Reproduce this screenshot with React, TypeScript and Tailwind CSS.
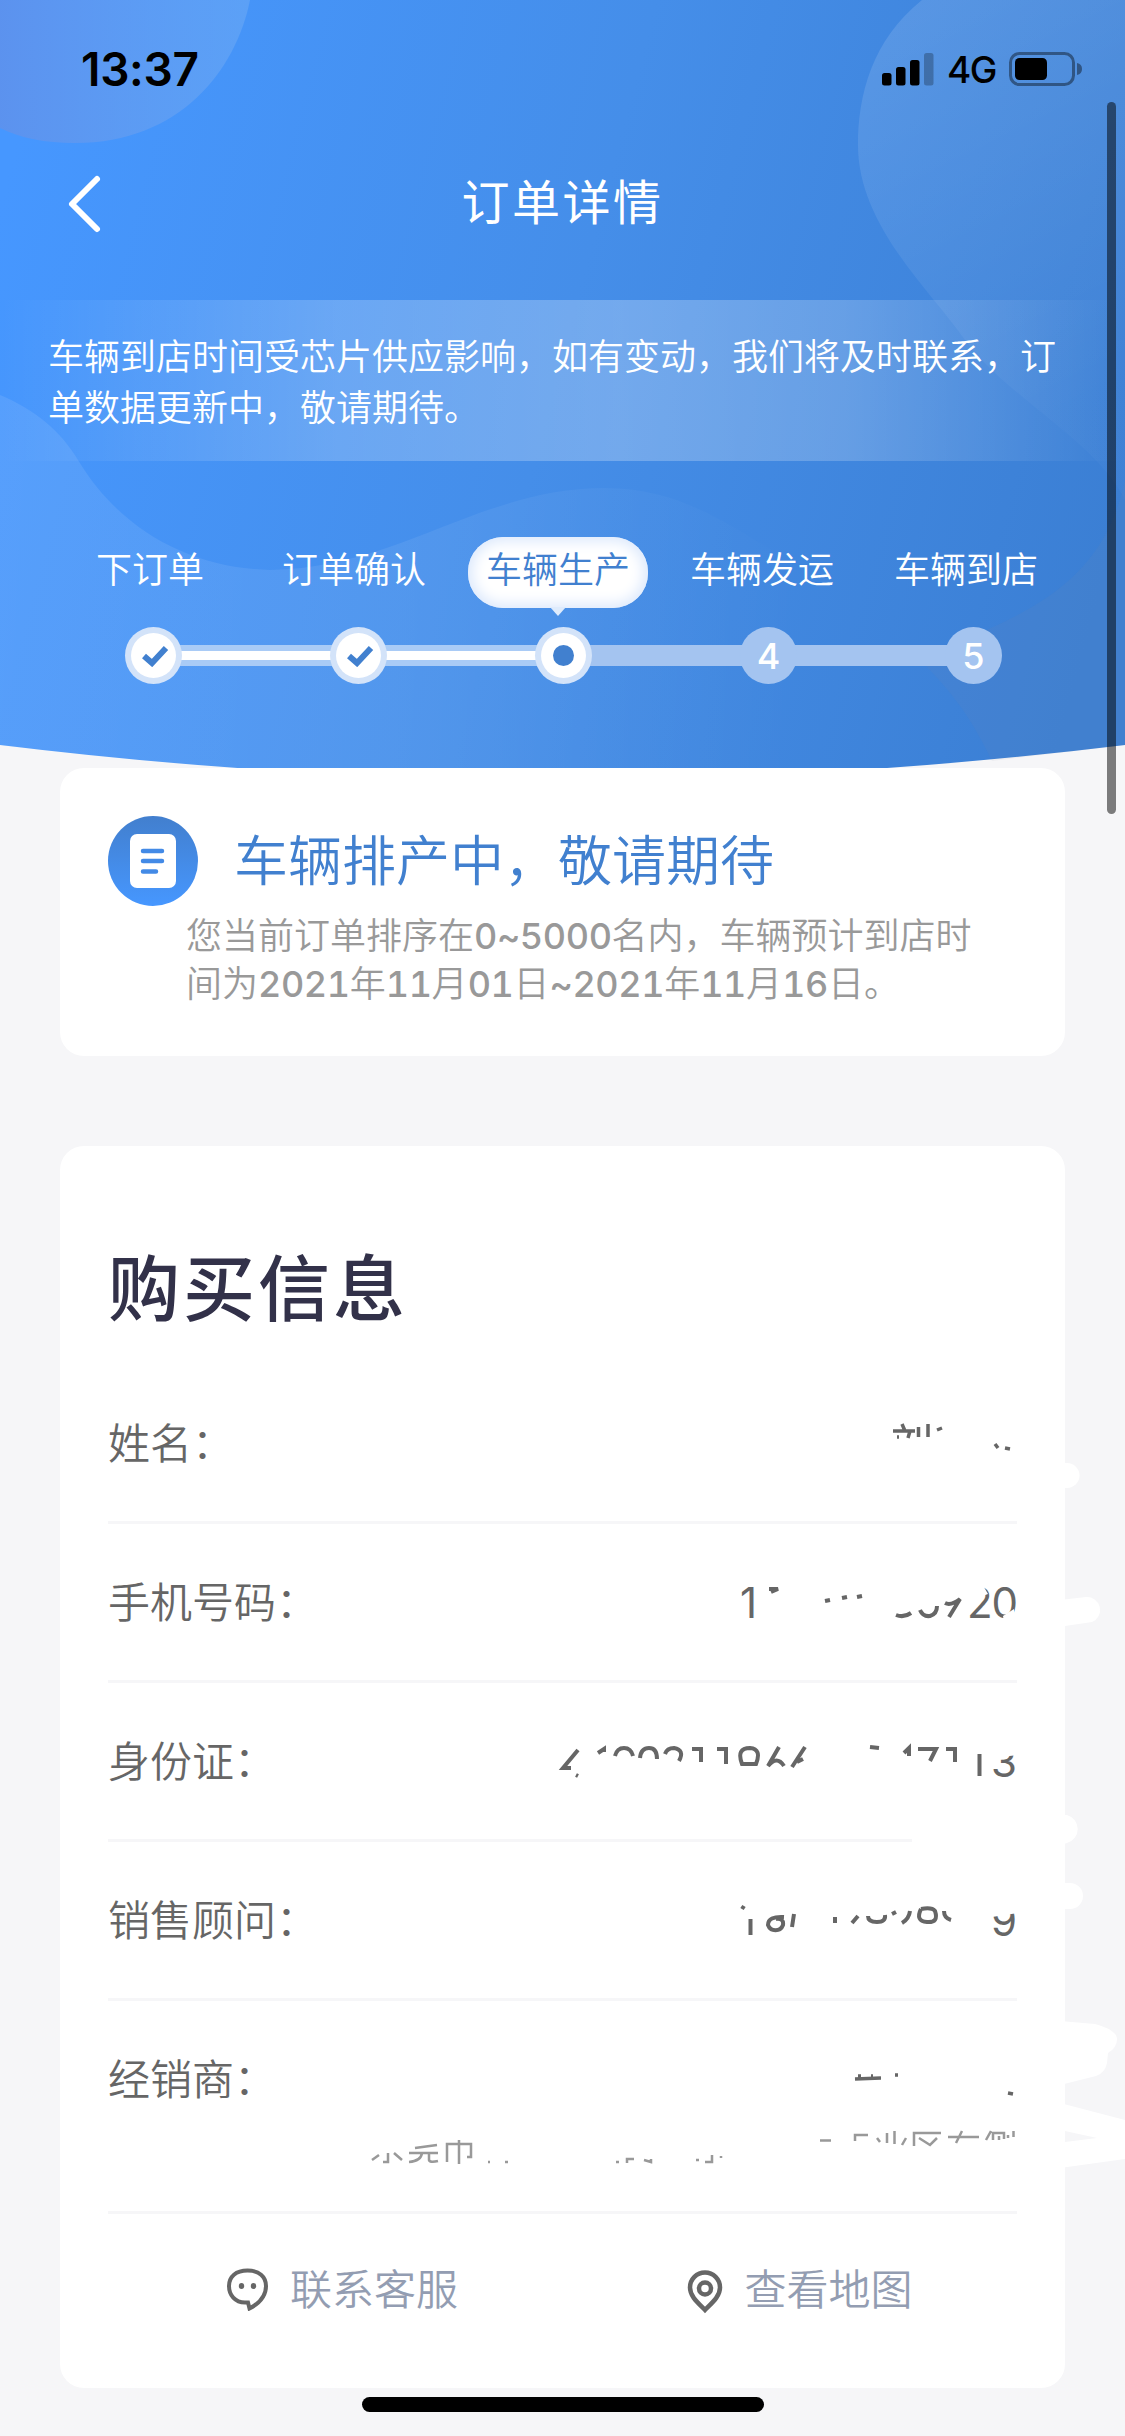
import React from 'react';

const steps = [
  { label: '下订单', state: 'done' },
  { label: '订单确认', state: 'done' },
  { label: '车辆生产', state: 'active' },
  { label: '车辆发运', state: 'todo' },
  { label: '车辆到店', state: 'todo' },
];

const Num: React.FC<{ children: React.ReactNode }> = ({ children }) => (
  <span className="font-['Inter'] leading-none font-[450] tabular-nums tracking-[-0.4px]">{children}</span>
);

const HeaderBackground: React.FC = () => (
  <svg className="absolute inset-0" width="1125" height="768" viewBox="0 0 1125 768" fill="none">
    <defs>
      <linearGradient id="sky" x1="0" y1="200" x2="1125" y2="500" gradientUnits="userSpaceOnUse">
        <stop offset="0" stopColor="#4697ff" />
        <stop offset="0.5" stopColor="#458ee9" />
        <stop offset="1" stopColor="#3b7fd4" />
      </linearGradient>
      <linearGradient id="blob" x1="0" y1="60" x2="240" y2="60" gradientUnits="userSpaceOnUse">
        <stop offset="0" stopColor="#6191ea" stopOpacity="0.8" />
        <stop offset="1" stopColor="#6aa8f5" stopOpacity="0.6" />
      </linearGradient>
      <linearGradient id="right" x1="860" y1="50" x2="1060" y2="420" gradientUnits="userSpaceOnUse">
        <stop offset="0" stopColor="#fff" stopOpacity="0.12" />
        <stop offset="1" stopColor="#fff" stopOpacity="0.02" />
      </linearGradient>
      <linearGradient id="wave" x1="0" y1="600" x2="800" y2="640" gradientUnits="userSpaceOnUse">
        <stop offset="0" stopColor="#fff" stopOpacity="0.09" />
        <stop offset="0.5" stopColor="#fff" stopOpacity="0.07" />
        <stop offset="1" stopColor="#fff" stopOpacity="0" />
      </linearGradient>
    </defs>
    <path d="M0 0H1125V745Q562 814 0 745Z" fill="url(#sky)" />
    <path d="M0 0H250C236 70 180 143 75 143C45 143 20 138 0 128Z" fill="url(#blob)" />
    <path d="M922 0C872 40 858 95 858 145C858 225 930 290 965 340C1010 400 1095 440 1125 500V0Z" fill="url(#right)" />
    <path d="M0 395C35 410 60 430 78 460C120 530 190 568 270 570C400 568 480 488 605 488C700 488 750 545 860 600C920 640 950 690 990 762Q790 784 562 780Q250 780 0 745Z" fill="url(#wave)" />
    <path d="M920 660C950 690 970 715 992 761L1125 745V480C1100 600 1000 620 920 660Z" fill="#8c8c9c" fillOpacity="0.08" />
  </svg>
);

const StatusBar: React.FC = () => (
  <div className="flex h-[138px] items-center justify-between pr-[42px] pl-[81px] font-['Inter'] text-black">
    <span className="text-[46px] leading-none font-semibold tracking-[-0.3px]">13:37</span>
    <div className="flex items-center gap-[13px]">
      <svg width="52" height="34" viewBox="0 0 52 34">
        <rect x="0" y="21" width="9.5" height="12.5" rx="2.5" />
        <rect x="14" y="15" width="9.5" height="18.5" rx="2.5" />
        <rect x="28" y="8" width="9.5" height="25.5" rx="2.5" />
        <rect x="42" y="1" width="9.5" height="32.5" rx="2.5" fillOpacity="0.25" />
      </svg>
      <span className="text-[37px] leading-none font-[450] tracking-[-1.5px]">4G</span>
      <svg width="74" height="36" viewBox="0 0 74 36">
        <rect x="1.5" y="2.5" width="63" height="31" rx="9" fill="none" stroke="#000" strokeOpacity="0.4" strokeWidth="3" />
        <rect x="6" y="7" width="32" height="22" rx="4.5" />
        <path d="M68 12Q73 13 73 18T68 24Z" fillOpacity="0.4" />
      </svg>
    </div>
  </div>
);

const Steps: React.FC = () => (
  <div className="pt-[76px]">
    <div className="grid grid-cols-[repeat(5,204px)] pl-[48px]">
      {steps.map((step) => (
        <div key={step.label} className="flex justify-center">
          {step.state === 'active' ? (
            <div className="relative flex h-[71px] w-[180px] items-center justify-center rounded-[35px] bg-white pb-[11px] text-[36px] text-[#4180cf] shadow-[inset_0_0_14px_4px_#dbe8fc]">
              {step.label}
              <svg className="absolute -bottom-[8px] left-[82px]" width="16" height="9" viewBox="0 0 16 9">
                <path d="M0 0H16L8 9Z" fill="#deebfc" />
              </svg>
            </div>
          ) : (
            <div className="flex h-[71px] items-center pb-[11px] text-[36px] text-white">{step.label}</div>
          )}
        </div>
      ))}
    </div>
    <div className="mt-[19px] flex items-center pl-[125px]">
      {steps.map((step, i) => (
        <React.Fragment key={step.label}>
          {i > 0 && (
            <div className={`-mx-[4px] flex h-[21px] w-[156px] items-center ${i < 3 ? 'bg-[#a9cbf6]' : 'bg-[#a4c4f0]'}`}>
              {i < 3 && <div className="h-[9px] w-full bg-white" />}
            </div>
          )}
          {step.state === 'todo' ? (
            <div className="z-10 flex size-[57px] shrink-0 items-center justify-center rounded-full bg-[#a4c4f0] font-['Inter'] text-[36px] leading-none font-medium text-white">
              {i + 1}
            </div>
          ) : (
            <div className="z-10 flex size-[57px] shrink-0 items-center justify-center rounded-full bg-[#d3e3f9]">
              <div className="flex size-[45px] items-center justify-center rounded-full bg-white">
                {step.state === 'done' ? (
                  <svg className="ml-[3px]" width="28" height="22" viewBox="0 0 28 22" fill="none" stroke="#4180cf" strokeWidth="6">
                    <path d="M3 11L11 18L25 3" />
                  </svg>
                ) : (
                  <div className="size-[21px] rounded-full bg-[#4180cf]" />
                )}
              </div>
            </div>
          )}
        </React.Fragment>
      ))}
    </div>
  </div>
);

const Row: React.FC<{ label: string; children?: React.ReactNode }> = ({ label, children }) => (
  <div className="flex h-[159px] items-center justify-between border-b-[3px] border-[#f6f6f8] text-[42px] text-[#666]">
    <span className="pb-[5px]">{label}</span>
    {children}
  </div>
);

// White marker strokes over the private values, and the bits of ink they leave
const MarkerStrokes: React.FC = () => (
  <svg className="pointer-events-none absolute inset-0" width="1125" height="2436" viewBox="0 0 1125 2436" fill="none">
    <g fill="#fff">
      <path d="M1060 1463H1067A12 12 0 0 1 1067 1488H1060Z" />
      <path d="M1060 1600L1086 1597A13 13 0 0 1 1092 1622L1065 1626H1060Z" />
      <path d="M1060 1815H1067A14.500 14.500 0 0 1 1067 1843L1060 1845Z" />
      <path d="M1060 1883H1070A13 13 0 0 1 1070 1909H1060Z" />
      <path d="M1060 2021L1095 2024Q1117 2030 1117 2039Q1117 2048 1108 2053L1107 2063Q1105 2073 1096 2076L1060 2085Z" />
      <path d="M1060 2103L1125 2120V2159L1060 2168Z" />
      <path d="M912 1836H1020V1844H912Z" />
      <path d="M966 1582H981L988 1594L966 1602Z" />
      <path d="M988 1740H1018V1755L1001 1757L992 1763Z" />
      <path d="M990 1902H1018V1913L992 1917Z" />
      <path d="M1003 1616L1014 1609V1622H1004Z" />
    </g>
    <path d="M1065 2131L1097 2138L1065 2142Z" fill="#f6f6f8" />
    <g stroke="#666" strokeWidth="3.500">
      <path d="M893 1431H915M902 1424L905 1431M910 1431L908 1438M897 1437H899M918.500 1427V1437M928 1424V1437M937 1430L942 1428" />
      <path d="M995 1444L998 1448M1005 1448L1010 1449" />
      <path d="M855 2079L881 2078M858 2076H861M871 2076H873M1008 2093L1013 2094M895 2075H898" />
    </g>
    <g stroke="#666" strokeWidth="4">
      <path d="M769 1589H778L771 1592M825 1601L830 1600M842 1598L847 1597M857 1597L862 1596" />
      <path d="M896 1615Q904 1618 911 1613M920 1610Q923 1617 930 1616Q937 1614 937 1606M945 1603Q951 1606 960 1599L949 1617" />
      <path d="M578 1750L563 1768H571M576 1775L578 1776M598 1753L604 1749V1752" />
      <path d="M615 1756Q617 1748 624 1748T633 1756M640 1758Q641 1748 649 1748T657 1759M665 1754Q667 1748 674 1748Q685 1750 679 1761" />
      <path d="M692 1749H701V1762M717 1749H726V1764M742 1764Q736 1748 750 1748Q762 1749 756 1764ZM779 1747L768 1766Q777 1755 784 1766M805 1747L792 1767M797 1762L803 1759" />
      <path d="M870 1747L879 1748M904 1753L909 1748V1756M918 1749H936L930 1761M946 1749H955V1762M979.500 1754V1776" />
      <path d="M742 1909L744 1906M750.500 1919V1935M784 1917Q768 1916 768 1925A8 8 0 0 0 783 1925Q784 1918 776 1919M794 1914L792 1927M835 1917V1923M858 1916L852 1923" />
      <path d="M868 1916Q868 1922 877 1922T885 1915M892 1914L896 1912M910 1911Q909 1919 902 1923M921 1909Q915 1921 927 1922T935 1911Q932 1907 921 1909M944 1911Q944 1918 951 1920" />
    </g>
    <g stroke="#999" strokeWidth="2.500">
      <path d="M820 2140.500H831M855 2141V2135H868M877 2138L880 2142M887 2133V2143M894.500 2131V2144M906 2138L902 2145M914 2146V2133H941M919 2138L930 2145L937 2138M948 2137H979M962 2131L956 2143M991 2131L986 2140M993 2140V2133H1004V2139M999 2136V2140M1008 2135V2138M1013.500 2131V2137" />
      <path d="M372 2160L379 2155M388 2153V2162H383M394 2153L402 2160M415 2148L437 2145M409 2153H438M422 2153Q421 2161 409 2162M429 2153V2160Q430 2163 438 2161M447 2162V2144H471V2157H467M459 2140V2164" />
      <path d="M488 2162H490M505 2162H508M616 2162H619M627 2163V2159H634M644 2160L651 2162V2159M696 2160H699M705 2162H712V2155M721 2156V2158" />
    </g>
  </svg>
);

export default function App() {
  return (
    <div className="relative h-[2436px] w-[1125px] overflow-hidden bg-[#f6f6f8] font-['Noto_Sans_CJK_SC',sans-serif] font-[350]">
      <header className="relative h-[768px]">
        <HeaderBackground />
        <div className="relative">
          <StatusBar />
          <nav className="grid h-[162px] grid-cols-3 items-start pt-[26px]">
            <svg className="mt-[10px] ml-[66px]" width="36" height="60" viewBox="0 0 36 60" fill="none" stroke="#fff" strokeWidth="6" strokeLinecap="round" strokeLinejoin="round">
              <path d="M31 5L6 30L31 55" />
            </svg>
            <h1 className="text-center text-[48px] leading-[70px] font-normal tracking-[2.5px] text-white">订单详情</h1>
          </nav>
          <p className="h-[161px] bg-[linear-gradient(to_right,rgb(255_255_255/0),rgb(255_255_255/0.2)_30%,rgb(255_255_255/0.25)_55%,rgb(255_255_255/0.2)_75%,rgb(255_255_255/0))] pt-[29px] pr-[60px] pl-[48px] text-[36px] leading-[51px] text-white">
            车辆到店时间受芯片供应影响，如有变动，我们将及时联系，订
            <br />
            单数据更新中，敬请期待。
          </p>
          <Steps />
        </div>
      </header>

      <main className="px-[60px]">
        <section className="h-[288px] rounded-[24px] bg-white px-[48px] pt-[48px]">
          <div className="flex h-[90px] items-center gap-[36px]">
            <div className="flex size-[90px] items-center justify-center rounded-full bg-linear-to-b from-[#427fce] to-[#4697ff]">
              <svg width="46" height="54" viewBox="0 0 46 54">
                <rect width="46" height="54" rx="7" fill="#fff" />
                <path d="M13 17H32M13 27H32M13 37.500H26" stroke="#438ae6" strokeWidth="4.500" strokeLinecap="round" />
              </svg>
            </div>
            <h2 className="pb-[6px] text-[54px] leading-none text-[#4180cf]">车辆排产中，敬请期待</h2>
          </div>
          <p className="mt-[3px] pl-[78px] text-[36px] leading-[48px] whitespace-nowrap text-[#999]">
            您当前订单排序在<Num>0~5000</Num>名内，车辆预计到店时
            <br />
            间为<Num>2021</Num>年<Num>11</Num>月<Num>01</Num>日<Num>~2021</Num>年<Num>11</Num>月<Num>16</Num>日。
          </p>
        </section>

        <section className="mt-[90px] h-[1242px] rounded-[24px] bg-white px-[48px] pt-[86px]">
          <h2 className="h-[133px] text-[72px] leading-[104px] font-medium tracking-[3px] text-[#323149]">购买信息</h2>
          <Row label="姓名：" />
          <Row label="手机号码：">
            <span className="flex w-[277px] justify-between font-['Inter'] font-normal">
              <span>1</span>
              <span className="tracking-[-1px]">20</span>
            </span>
          </Row>
          <Row label="身份证：">
            <span className="font-['Inter'] font-normal">3</span>
          </Row>
          <Row label="销售顾问：">
            <span className="font-['Inter'] font-normal">9</span>
          </Row>
          <div className="h-[213px] border-b-[3px] border-[#f6f6f8] text-[42px] leading-[151px] text-[#666]">经销商：</div>
          <div className="grid grid-cols-2 pt-[42px] text-[42px] leading-[62px] text-[#939db2]">
            <button className="flex items-center gap-[21px] pl-[118px]">
              <svg className="mt-[4px]" width="43" height="44" viewBox="0 0 43 44" fill="none" stroke="#666" strokeWidth="4">
                <path d="M22 35.500H19C9 35.500 3 28 3 19C3 9.500 10 3.500 21.500 3.500S40 9.500 40 19C40 29 34 36 23.500 41.500Z" />
                <ellipse cx="15.500" cy="19" rx="2.700" ry="3" fill="#666" stroke="none" />
                <ellipse cx="27.500" cy="19" rx="2.700" ry="3" fill="#666" stroke="none" />
              </svg>
              联系客服
            </button>
            <button className="flex items-center gap-[22px] pl-[124px]">
              <svg className="mt-[9px]" width="36" height="44" viewBox="0 0 36 44" fill="none" stroke="#666" strokeWidth="4.500">
                <path d="M18 40C10 32 3 26 3 17.500A15 15 0 0 1 33 17.500C33 26 26 32 18 40Z" />
                <circle cx="18" cy="18.500" r="6" />
              </svg>
              查看地图
            </button>
          </div>
        </section>
      </main>

      <MarkerStrokes />
      <div className="absolute top-[102px] left-[1107px] h-[712px] w-[9px] rounded-full bg-black/50" />
      <div className="absolute bottom-[24px] left-[362px] h-[15px] w-[402px] rounded-full bg-black" />
    </div>
  );
}
